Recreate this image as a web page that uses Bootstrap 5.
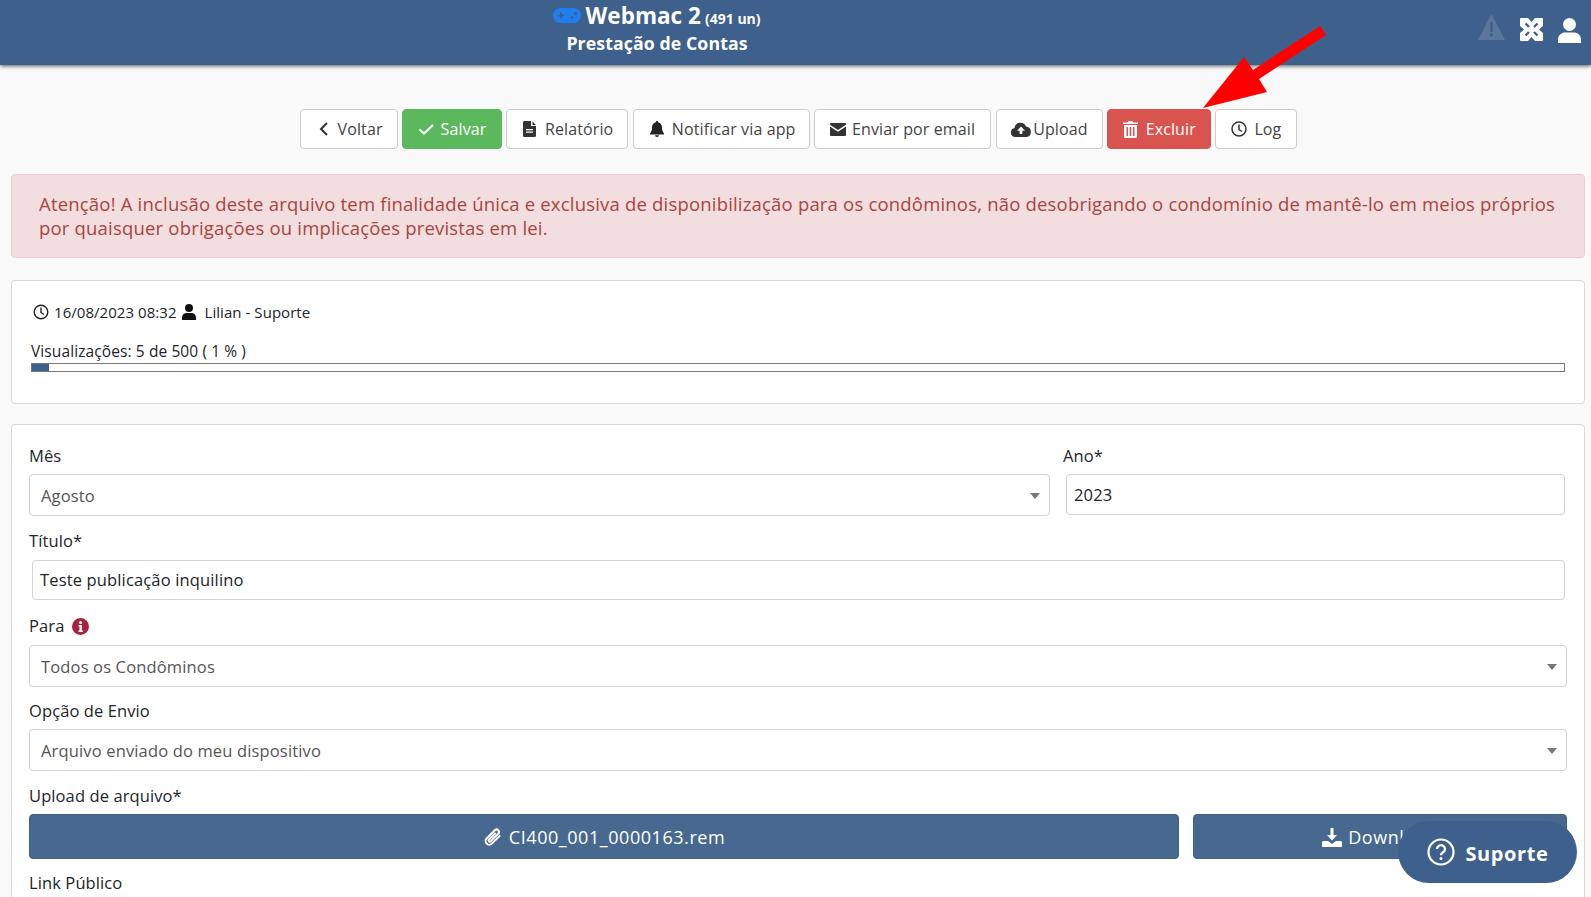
<!DOCTYPE html>
<html lang="pt-BR">
<head>
<meta charset="utf-8">
<title>Prestação de Contas</title>
<link href="https://cdn.jsdelivr.net/npm/bootstrap@5.3.0/dist/css/bootstrap.min.css" rel="stylesheet">
<style>
html,body{height:897px;overflow:hidden}
body{font-family:"Open Sans",sans-serif;font-size:16px;background:#f9f9f9;color:#212529;position:relative}
a{text-decoration:none}
.topbar{height:65px;background:#3e608c;box-shadow:0 1px 4px rgba(0,0,0,.65);color:#fff}
.top-title{width:1314px;padding-top:1px;text-align:center;font-weight:700;line-height:29px}
.top-title .t1{font-size:22.500px}
.top-title .t2{font-size:14px}
.top-title .t3{font-size:17.700px;line-height:27px;display:block;margin-top:-3px;letter-spacing:.1px}
.top-icons{gap:15px;padding:14px 10px 0 0;margin-left:auto}
.toolbar{gap:4px;padding-top:44px;padding-left:300px}
.tbtn{height:40px;padding:0 14px;font-size:16px;line-height:38px;background:#fff;border:1px solid #ccc;color:#444;border-radius:4px;display:inline-flex;align-items:center;gap:6px;white-space:nowrap;letter-spacing:.12px}
.tbtn svg{flex:none}
.tbtn.ok{background:#5cb85c;border-color:#5cb85c;color:#fff;padding:0 14.500px}
.tbtn.del{background:#d9534f;border-color:#d9534f;color:#fff;gap:8px;padding:0 14.500px}
.tbtn.back{padding:0 14.500px}
.tbtn.bell{padding:0 13.500px;margin-left:1px}
.tbtn.mail{padding:0 15px}
.tbtn.cloud{gap:2px;padding:0 14.500px 0 14px;margin-left:1px}
.tbtn.clock{gap:7px;padding:0 14.500px 0 15px}
.notice{margin:25px 6px 0 11px;padding:17px 27px 15px;height:84px;background:#f2dede;border:1px solid #e8cfd2;border-radius:4px;color:#a94442;font-size:18.500px;line-height:24px;letter-spacing:.19px}
.panel{margin:22px 6px 0 11px;background:#fff;border:1px solid #d5d8de;border-radius:4px}
.panel-a{height:124px;padding:20px 19px 0}
.meta{font-size:15px;gap:5px;height:22px;margin-bottom:18px;padding-left:2px;letter-spacing:.05px}
.views{font-size:15.500px;line-height:20px;letter-spacing:.1px}
.bar-out{height:9px;border:1px solid #777;margin-top:2px;background:#fff}
.bar-in{height:100%;background:#3e608c}
.panel-b{margin-top:20px;height:520px;padding:19px 17px 0 17px}
.lbl{font-size:16.500px;line-height:24px;margin:0 0 7px;display:block;letter-spacing:.1px}
.lbl-first{margin-bottom:6px}
.lbl-year{margin-left:-3px}
.fld{height:41px;border:1px solid #ced4da;border-radius:4px;background:#fff;font-size:16.500px;color:#212529;padding:0 7px;display:flex;align-items:center;letter-spacing:.15px}
.fld-year{padding-top:2px}
.sel{height:42px;color:#555;padding:2px 11px 0;position:relative}
.sel::after{content:"";position:absolute;right:9px;top:18px;border:5px solid transparent;border-top:6px solid #777;border-bottom:0}
.gap-a{margin-bottom:13px}
.gap-b{margin-bottom:14px}
.gap-c{margin-bottom:12px}
.col-month{width:1021px}
.col-year{padding-left:16px;padding-right:2px}
.fld-title{height:40px;margin-left:3px;margin-right:2px}
.lbl-info{display:flex;align-items:center;gap:8px}
.lbl-opt{margin-bottom:6px}
.col-file{width:1150px}
.col-down{padding-left:14px}
.blue{height:45px;padding-top:1px;background:#48698f;border:1px solid #3e608c;border-radius:4px;color:#fff;font-size:18px;gap:6px;letter-spacing:.55px}
.lbl-link{margin-top:12px}
.help{position:absolute;left:1398px;top:821px;width:179px;height:62px;border-radius:31px;background:#3e608c;color:#fff;font-weight:700;font-size:20px;letter-spacing:.6px;gap:11px}
.help-txt{padding-top:3px}
.pointer{position:absolute;left:1190px;top:20px}
</style>
</head>
<body>
<header class="topbar d-flex">
  <div class="top-title">
    <svg width="28" height="16" viewBox="0 0 28 16" class="align-baseline"><rect y="0" width="28" height="15" rx="7.500" fill="#1f7ef0"/><path d="M5 7.500h6M8 4.500v6" stroke="#3e608c" stroke-width="2"/><circle cx="19" cy="9.500" r="1.600" fill="#3e608c"/><circle cx="22.500" cy="5.500" r="1.600" fill="#3e608c"/></svg>
    <span class="t1">Webmac 2</span> <span class="t2">(491 un)</span>
    <span class="t3">Prestação de Contas</span>
  </div>
  <div class="top-icons d-flex align-items-start">
    <svg width="27" height="27" viewBox="0 0 27 27"><path d="M13.500 0 27 26H0Z" fill="#5a769b"/><rect x="12.300" y="8" width="2.400" height="10" fill="#3e608c"/><circle cx="13.500" cy="21" r="1.700" fill="#3e608c"/></svg>
    <svg width="23" height="23" viewBox="0 0 23 23" class="mt-1"><rect width="23" height="23" rx="1" fill="#fff"/><path d="M8 0h7l-3.500 4ZM8 23h7l-3.500-4ZM0 8v7l4-3.500ZM23 8v7l-4-3.500Z" fill="#3e608c"/><path d="M5.500 5.500 9 9M17.500 5.500 14 9M5.500 17.500 9 14M17.500 17.500 14 14" stroke="#3e608c" stroke-width="2.400"/></svg>
    <svg width="23" height="25" viewBox="0 0 23 25" class="mt-1"><circle cx="11.500" cy="6.500" r="6.500" fill="#fff"/><path d="M0 25v-3.500C0 17 4 14.500 7 14.500h9c3 0 7 2.500 7 7V25Z" fill="#fff"/></svg>
  </div>
</header>

<div class="toolbar d-flex">
  <a class="tbtn back"><svg width="16" height="16" viewBox="0 0 16 16"><path d="M11 2 5 8l6 6" fill="none" stroke="#333" stroke-width="2"/></svg>Voltar</a>
  <a class="tbtn ok"><svg width="17" height="16" viewBox="0 0 17 16"><path d="m1.500 8.500 4.500 4L15 4" fill="none" stroke="#fff" stroke-width="2.200"/></svg>Salvar</a>
  <a class="tbtn"><svg width="18" height="16" viewBox="0 0 18 16"><path d="M3.500 0H10v5h5v9.500a1.500 1.500 0 0 1-1.500 1.500h-10A1.500 1.500 0 0 1 2 14.500v-13A1.500 1.500 0 0 1 3.500 0Zm8 .5L15 4h-3.500ZM5 8v1.200h7V8Zm0 2.500v1.200h7v-1.200Z" fill="#333" fill-rule="evenodd"/></svg>Relatório</a>
  <a class="tbtn bell"><svg width="18" height="16" viewBox="0 0 18 16"><path d="M9 0a1.200 1.200 0 0 1 1.200 1.300C12.600 1.800 14 4 14 6.500c0 3.500 1 4.500 2 6v1H2v-1c1-1.500 2-2.500 2-6 0-2.500 1.400-4.700 3.800-5.200A1.200 1.200 0 0 1 9 0ZM7 14.300h4a2 1.700 0 0 1-4 0Z" fill="#222"/></svg>Notificar via app</a>
  <a class="tbtn mail"><svg width="16" height="13" viewBox="0 0 16 13"><path d="M1 0h14a1 1 0 0 1 1 1v.8L8 7 0 1.800V1a1 1 0 0 1 1-1Zm-1 3.500L8 8.700l8-5.200V12a1 1 0 0 1-1 1H1a1 1 0 0 1-1-1Z" fill="#333"/></svg>Enviar por email</a>
  <a class="tbtn cloud"><svg width="20" height="15" viewBox="0 0 20 15"><path d="M4.500 15A4.500 4.500 0 0 1 3.500 6.100 6 6 0 0 1 15 4.500 5.300 5.300 0 0 1 15.500 15ZM10 4.500 6 8.800h2.600V12h2.800V8.800H14Z" fill="#333" fill-rule="evenodd"/></svg>Upload</a>
  <a class="tbtn del"><svg width="15" height="17" viewBox="0 0 15 17"><path d="M5.500 0h4l1 1.500H15V3H0V1.500h4.500ZM1 4h13v11.500A1.500 1.500 0 0 1 12.500 17h-10A1.500 1.500 0 0 1 1 15.500Zm2.500 2v9h1.500V6Zm3.200 0v9h1.600V6ZM10 6v9h1.500V6Z" fill="#fff" fill-rule="evenodd"/></svg>Excluir</a>
  <a class="tbtn clock"><svg width="16" height="16" viewBox="0 0 16 16"><circle cx="8" cy="8" r="7" fill="none" stroke="#333" stroke-width="1.500"/><path d="M8 3.500V8.500l3 2" fill="none" stroke="#333" stroke-width="1.500"/></svg>Log</a>
</div>

<div class="notice">Atenção! A inclusão deste arquivo tem finalidade única e exclusiva de disponibilização para os condôminos, não desobrigando o condomínio de mantê-lo em meios próprios por quaisquer obrigações ou implicações previstas em lei.</div>

<section class="panel panel-a">
  <div class="meta d-flex align-items-center">
    <svg width="16" height="16" viewBox="0 0 16 16"><circle cx="8" cy="8" r="6.800" fill="none" stroke="#222" stroke-width="1.400"/><path d="M8 3.500V8.500l3 2" fill="none" stroke="#222" stroke-width="1.400"/></svg>
    <span>16/08/2023 08:32</span>
    <svg width="14" height="16" viewBox="0 0 14 16"><circle cx="7" cy="4" r="4" fill="#111"/><path d="M0 16v-2.500C0 11 2 9 4.500 9h5C12 9 14 11 14 13.500V16Z" fill="#111"/></svg>
    <span class="ms-1">Lilian - Suporte</span>
  </div>
  <div class="views">Visualizações: 5 de 500 ( 1 % )</div>
  <div class="bar-out"><div class="bar-in" style="width:1.1%"></div></div>
</section>

<section class="panel panel-b">
  <div class="row g-0 gap-a">
    <div class="col-auto col-month">
      <label class="lbl lbl-first">Mês</label>
      <div class="fld sel">Agosto</div>
    </div>
    <div class="col col-year">
      <label class="lbl lbl-first lbl-year">Ano*</label>
      <div class="fld fld-year">2023</div>
    </div>
  </div>
  <label class="lbl">Título*</label>
  <div class="fld fld-title gap-b">Teste publicação inquilino</div>
  <label class="lbl lbl-info">Para
    <svg width="17" height="17" viewBox="0 0 17 17"><circle cx="8.500" cy="8.500" r="8.500" fill="#a6243f"/><circle cx="8.500" cy="4.500" r="1.500" fill="#fff"/><path d="M6.500 7h3.300v5.500h1V14H6.500v-1.500h1V8.500h-1Z" fill="#fff"/></svg>
  </label>
  <div class="fld sel gap-c">Todos os Condôminos</div>
  <label class="lbl lbl-opt">Opção de Envio</label>
  <div class="fld sel gap-a">Arquivo enviado do meu dispositivo</div>
  <label class="lbl lbl-opt">Upload de arquivo*</label>
  <div class="row g-0">
    <div class="col-auto col-file">
      <div class="blue d-flex align-items-center justify-content-center">
        <svg width="20" height="20" viewBox="0 0 18 18"><path d="M15.500 7.500 8 15a3.300 3.300 0 0 1-4.700-4.700l7.500-7.500a2.200 2.200 0 0 1 3.100 3.100l-7 7a1 1 0 0 1-1.500-1.500l6-6" fill="none" stroke="#fff" stroke-width="1.800"/></svg>
        CI400_001_0000163.rem
      </div>
    </div>
    <div class="col col-down">
      <div class="blue d-flex align-items-center justify-content-center">
        <svg width="20" height="19" viewBox="0 0 20 19"><path d="M8.500 0h3v7h3.500L10 12.500 5 7h3.500ZM0 14.500C0 13.500.8 13 1.500 13H6l4 3 4-3h4.500c.7 0 1.500.5 1.500 1.500V18c0 .6-.5 1-1 1H1c-.5 0-1-.4-1-1Z" fill="#fff"/></svg>
        Download
      </div>
    </div>
  </div>
  <label class="lbl lbl-link">Link Público</label>
</section>

<svg class="pointer" width="140" height="92" viewBox="0 0 140 92"><path d="M13 88 54 37 63 50 130 6 136 15 69 59 77 72Z" fill="#f00"/></svg>

<a class="help d-flex align-items-center justify-content-center">
  <svg width="28" height="28" viewBox="0 0 28 28"><circle cx="14" cy="14" r="12.500" fill="none" stroke="#fff" stroke-width="2.200"/><path d="M10 11a4 3.800 0 1 1 6 3.300c-1.300.8-2 1.400-2 3" fill="none" stroke="#fff" stroke-width="2.300"/><circle cx="14" cy="20.500" r="1.500" fill="#fff"/></svg>
  <span class="help-txt">Suporte</span>
</a>
<script src="https://cdn.jsdelivr.net/npm/bootstrap@5.3.0/dist/js/bootstrap.bundle.min.js"></script>
</body>
</html>
